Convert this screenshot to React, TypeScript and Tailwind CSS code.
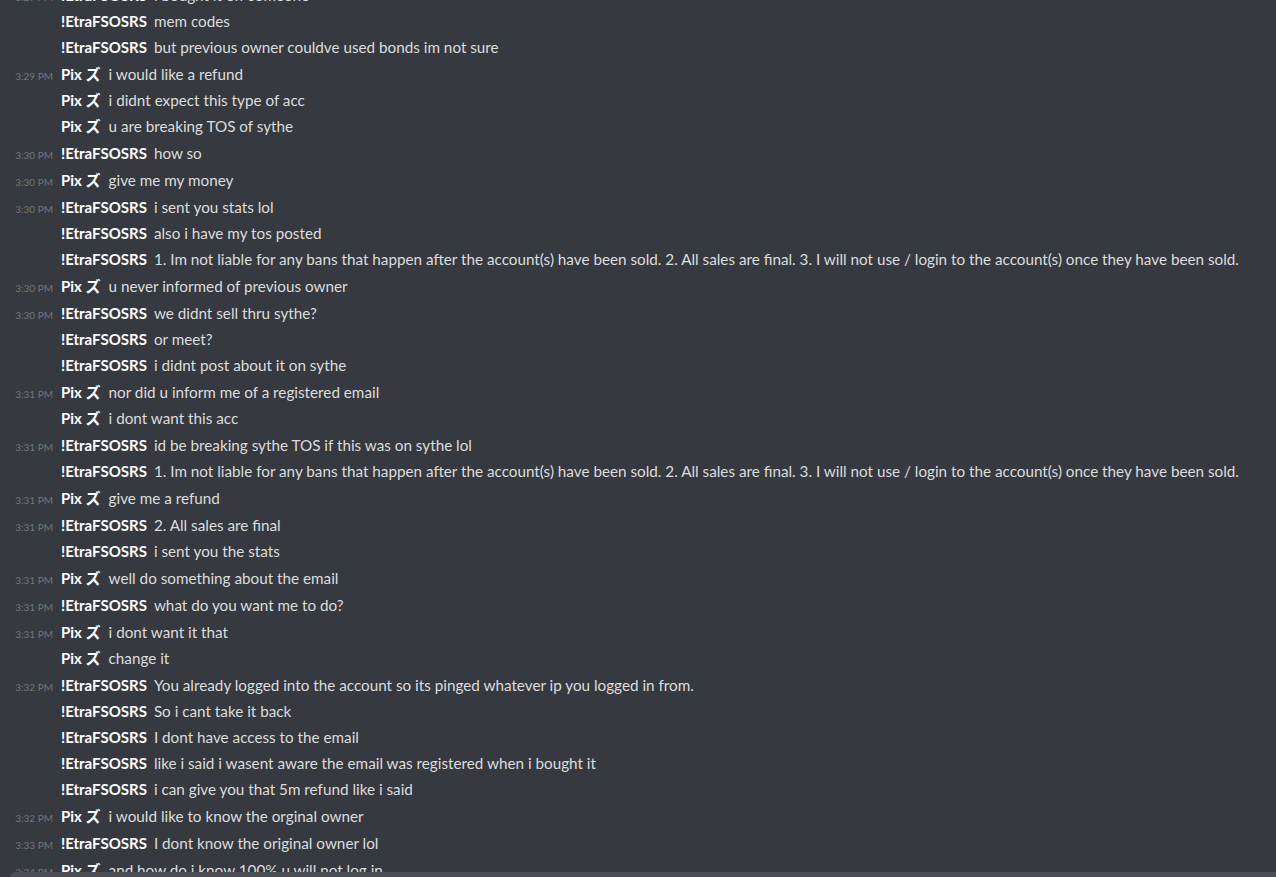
import React from "react";

type Msg = { g: boolean; t?: string; u: "E" | "P"; m: string };

const TOS =
  "1. Im not liable for any bans that happen after the account(s) have been sold. 2. All sales are final. 3. I will not use / login to the account(s) once they have been sold.";

const msgs: Msg[] = [
  { g: true, t: "3:29 PM", u: "E", m: "i bought it off someone" },
  { g: false, u: "E", m: "mem codes" },
  { g: false, u: "E", m: "but previous owner couldve used bonds im not sure" },
  { g: true, t: "3:29 PM", u: "P", m: "i would like a refund" },
  { g: false, u: "P", m: "i didnt expect this type of acc" },
  { g: false, u: "P", m: "u are breaking TOS of sythe" },
  { g: true, t: "3:30 PM", u: "E", m: "how so" },
  { g: true, t: "3:30 PM", u: "P", m: "give me my money" },
  { g: true, t: "3:30 PM", u: "E", m: "i sent you stats lol" },
  { g: false, u: "E", m: "also i have my tos posted" },
  { g: false, u: "E", m: TOS },
  { g: true, t: "3:30 PM", u: "P", m: "u never informed of previous owner" },
  { g: true, t: "3:30 PM", u: "E", m: "we didnt sell thru sythe?" },
  { g: false, u: "E", m: "or meet?" },
  { g: false, u: "E", m: "i didnt post about it on sythe" },
  { g: true, t: "3:31 PM", u: "P", m: "nor did u inform me of a registered email" },
  { g: false, u: "P", m: "i dont want this acc" },
  { g: true, t: "3:31 PM", u: "E", m: "id be breaking sythe TOS if this was on sythe lol" },
  { g: false, u: "E", m: TOS },
  { g: true, t: "3:31 PM", u: "P", m: "give me a refund" },
  { g: true, t: "3:31 PM", u: "E", m: "2. All sales are final" },
  { g: false, u: "E", m: "i sent you the stats" },
  { g: true, t: "3:31 PM", u: "P", m: "well do something about the email" },
  { g: true, t: "3:31 PM", u: "E", m: "what do you want me to do?" },
  { g: true, t: "3:31 PM", u: "P", m: "i dont want it that" },
  { g: false, u: "P", m: "change it" },
  { g: true, t: "3:32 PM", u: "E", m: "You already logged into the account so its pinged whatever ip you logged in from." },
  { g: false, u: "E", m: "So i cant take it back" },
  { g: false, u: "E", m: "I dont have access to the email" },
  { g: false, u: "E", m: "like i said i wasent aware the email was registered when i bought it" },
  { g: false, u: "E", m: "i can give you that 5m refund like i said" },
  { g: true, t: "3:32 PM", u: "P", m: "i would like to know the orginal owner" },
  { g: true, t: "3:33 PM", u: "E", m: "I dont know the original owner lol" },
  { g: true, t: "3:34 PM", u: "P", m: "and how do i know 100% u will not log in" },
];

export default function App() {
  return (
    <div
      className="relative h-[877px] w-[1276px] overflow-hidden bg-[#36393f]"
      style={{ fontFamily: '"Lato", "Noto Sans CJK JP", sans-serif' }}
    >
      <div className="mt-[-19px] flex flex-col">
        {msgs.map((x, i) => (
          <div
            key={i}
            className={
              "flex items-baseline whitespace-nowrap " +
              (x.g ? "h-[27px] pt-[3px]" : "h-[26px] pt-[2px]")
            }
          >
            <div className="w-[53px] shrink-0 text-right text-[10px] text-[#72767d]">
              {x.t ?? ""}
            </div>
            <div className="ml-[8px] text-[15px] font-bold text-white">
              {x.u === "E" ? "!EtraFSOSRS" : "Pix ズ"}
            </div>
            <div
              className={
                (x.u === "E" ? "ml-[7px]" : "ml-[8px]") +
                " text-[15.25px] text-[#dcddde]"
              }
            >
              {x.m}
            </div>
          </div>
        ))}
      </div>
      <div className="absolute bottom-0 left-[10px] right-0 h-[5px] rounded-tl-[6px] bg-[#4a4d53]" />
    </div>
  );
}
